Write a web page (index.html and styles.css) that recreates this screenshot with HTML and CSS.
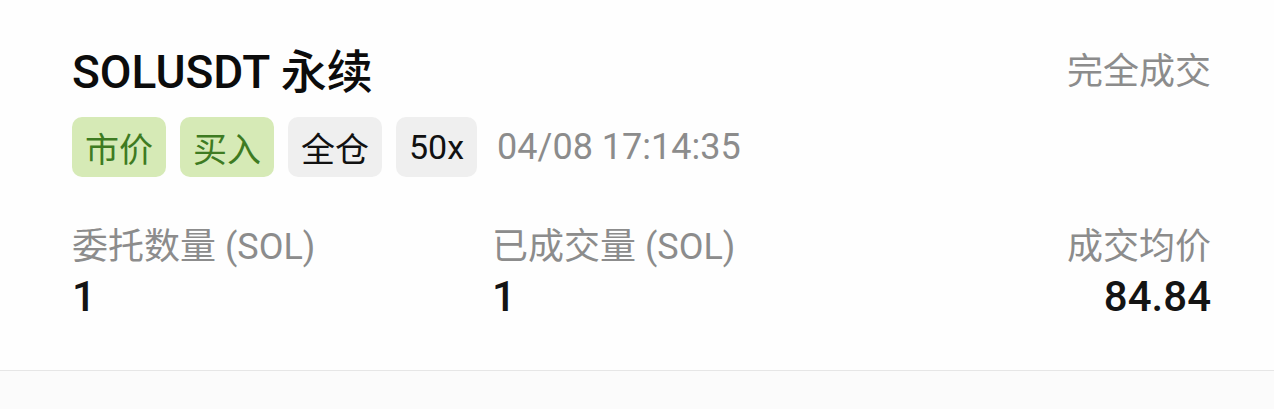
FILE: index.html
```html
<!DOCTYPE html>
<html lang="zh-CN">
<head>
  <meta charset="UTF-8">
  <meta name="viewport" content="width=device-width, initial-scale=1">
  <title>SOLUSDT 永续 订单</title>
  <link rel="stylesheet" href="styles.css">
</head>
<body>

  <div class="order">
    <div class="head">
      <h1 class="symbol">SOLUSDT 永续</h1>
      <span class="status">完全成交</span>
    </div>

    <div class="tags">
      <span class="tag green">市价</span>
      <span class="tag green">买入</span>
      <span class="tag">全仓</span>
      <span class="tag">50x</span>
      <span class="time">04/08 17:14:35</span>
    </div>

    <div class="stats">
      <div class="stat">
        <div class="label">委托数量 (SOL)</div>
        <div class="value">1</div>
      </div>
      <div class="stat">
        <div class="label">已成交量 (SOL)</div>
        <div class="value">1</div>
      </div>
      <div class="stat right">
        <div class="label">成交均价</div>
        <div class="value">84.84</div>
      </div>
    </div>
  </div>

  <div class="rest"></div>

</body>
</html>
```

FILE: styles.css
```css
body {
  margin: 0;
  padding: 0;
  background-color: #fbfbfb;
  font-family: 'Roboto', 'Noto Sans CJK SC', sans-serif;
  color: #111;
}

.order {
  background-color: #fefefe;
  padding: 44px 63px 49px 72px;
  border-bottom: 1px solid #e6e6e6;
}

.head {
  display: flex;
  justify-content: space-between;
  align-items: center;
  height: 56px;
}

.symbol {
  margin: 0;
  font-size: 46px;
  line-height: 56px;
  font-weight: 500;
  color: #0c0c0c;
}

.status {
  font-size: 36px;
  line-height: 56px;
  color: #8c8c8c;
}

.tags {
  display: flex;
  align-items: center;
  gap: 14px;
  margin-top: 17px;
}

.tag {
  display: flex;
  align-items: center;
  height: 60px;
  padding: 0 13px;
  border-radius: 10px;
  background-color: #efefef;
  font-size: 34px;
  color: #111;
}

.tag.green {
  background-color: #d6eab6;
  color: #3e7b22;
}

.time {
  margin-left: 6px;
  font-size: 36px;
  color: #8c8c8c;
}

.stats {
  display: grid;
  grid-template-columns: 420px 1fr auto;
  margin-top: 48px;
}

.label {
  font-size: 36px;
  line-height: 44px;
  color: #8c8c8c;
}

.value {
  margin-top: 4px;
  font-size: 42px;
  line-height: 48px;
  font-weight: 500;
  color: #141414;
}

.stat.right {
  text-align: right;
}

.rest {
  height: 40px;
}
```
